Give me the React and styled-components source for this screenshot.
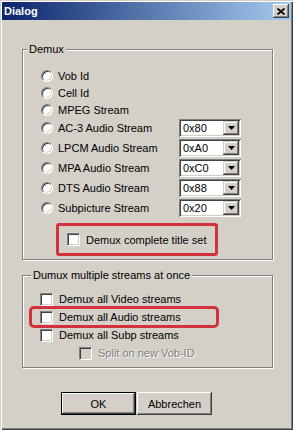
import React from 'react';
import styled, { createGlobalStyle } from 'styled-components';

const colors = {
    face: '#d4d0c8',
    shadow: '#808080',
    dark: '#404040',
    light: '#ffffff',
    mark: '#d2323e',
};

const GlobalStyle = createGlobalStyle`
    html, body {
        margin: 0;
        padding: 0;
        background: ${colors.face};
    }
    body {
        font-family: "Liberation Sans", Arial, sans-serif;
        font-size: 11px;
        color: #000;
    }
`;

const Window = styled.div`
    width: 293px;
    height: 430px;
    box-sizing: border-box;
    padding: 2px;
    background: ${colors.face};
    box-shadow: inset 1px 1px 0 ${colors.face}, inset 2px 2px 0 ${colors.light},
        inset -1px -1px 0 ${colors.dark}, inset -2px -2px 0 ${colors.shadow};
    display: flex;
    flex-direction: column;
`;

const TitleBar = styled.div`
    height: 18px;
    display: flex;
    align-items: center;
    justify-content: space-between;
    padding: 0 2px 0 2px;
    background: linear-gradient(to right, #0a246a, #a6caf0);
    color: #fff;
    font-weight: bold;
    font-size: 11px;
`;

const CloseButton = styled.div`
    width: 16px;
    height: 14px;
    display: flex;
    align-items: center;
    justify-content: center;
    background: ${colors.face};
    box-shadow: inset -1px -1px 0 ${colors.dark}, inset 1px 1px 0 ${colors.light},
        inset -2px -2px 0 ${colors.shadow};
`;

const Body = styled.div`
    padding: 0 0 0 20px;
    display: flex;
    flex-direction: column;
`;

const Group = styled.div`
    position: relative;
    width: 251px;
    box-sizing: border-box;
    margin-top: ${(p) => p.$top}px;
    padding: ${(p) => p.$pad};
    border: 1px solid ${colors.shadow};
    box-shadow: inset 1px 1px 0 ${colors.light}, 1px 1px 0 ${colors.light};
`;

const Legend = styled.span`
    position: absolute;
    top: -7px;
    left: ${(p) => p.$left}px;
    padding: 0 2px;
    line-height: 13px;
    background: ${colors.face};
`;

const OptionList = styled.div`
    width: 200px;
    display: flex;
    flex-direction: column;
`;

const Row = styled.div`
    height: ${(p) => p.$h || 18}px;
    display: flex;
    align-items: center;
    margin-left: ${(p) => p.$indent || 0}px;
    color: ${(p) => (p.$disabled ? colors.shadow : '#000')};
    text-shadow: ${(p) => (p.$disabled ? `1px 1px 0 ${colors.light}` : 'none')};
    white-space: nowrap;

    ${(p) =>
        p.$marked &&
        `
        margin-left: -9px;
        padding-left: 9px;
        width: 186px;
        box-sizing: border-box;
        outline: 3px solid ${colors.mark};
        outline-offset: -1px;
        border-radius: 3px;
    `}
`;

const Radio = styled.span`
    width: 12px;
    height: 12px;
    box-sizing: border-box;
    flex: none;
    border-radius: 50%;
    background: #fff;
    border: 1px solid;
    border-color: ${colors.shadow} ${colors.light} ${colors.light} ${colors.shadow};
    box-shadow: inset 1px 1px 0 ${colors.dark}, inset -1px -1px 0 ${colors.face};
    margin-right: 5px;
`;

const Check = styled.span`
    width: 13px;
    height: 13px;
    box-sizing: border-box;
    flex: none;
    background: ${(p) => (p.$disabled ? colors.face : '#fff')};
    border: 1px solid;
    border-color: ${colors.shadow} ${colors.light} ${colors.light} ${colors.shadow};
    box-shadow: inset 1px 1px 0 ${colors.dark}, inset -1px -1px 0 ${colors.face};
    margin-right: 6px;
`;

const Combo = styled.div`
    margin-left: auto;
    width: 62px;
    height: 18px;
    box-sizing: border-box;
    padding: 2px;
    display: flex;
    align-items: center;
    background: #fff;
    box-shadow: inset 1px 1px 0 ${colors.shadow}, inset -1px -1px 0 ${colors.light},
        inset 2px 2px 0 ${colors.dark}, inset -2px -2px 0 ${colors.face};
`;

const ComboText = styled.span`
    flex: 1;
    padding-left: 2px;
`;

const DropButton = styled.span`
    width: 16px;
    height: 14px;
    display: flex;
    align-items: center;
    justify-content: center;
    background: ${colors.face};
    box-shadow: inset -1px -1px 0 ${colors.dark}, inset 1px 1px 0 ${colors.face},
        inset -2px -2px 0 ${colors.shadow}, inset 2px 2px 0 ${colors.light};
`;

const MarkBox = styled.div`
    margin: 5px 0 0 15px;
    width: 162px;
    height: 33px;
    box-sizing: border-box;
    border: 3px solid ${colors.mark};
    border-radius: 3px;
    padding-left: 8px;
    display: flex;
    align-items: center;
`;

const ButtonRow = styled.div`
    margin: 24px 0 0 39px;
    display: flex;
    gap: 1px;
`;

const Button = styled.div`
    width: 75px;
    height: 23px;
    box-sizing: border-box;
    display: flex;
    align-items: center;
    justify-content: center;
    background: ${colors.face};
    border: 1px solid ${(p) => (p.$default ? '#000' : 'transparent')};
    box-shadow: ${(p) =>
        p.$default
            ? `inset -1px -1px 0 ${colors.dark}, inset 1px 1px 0 ${colors.light}, inset -2px -2px 0 ${colors.shadow}`
            : `inset -1px -1px 0 ${colors.dark}, inset 1px 1px 0 ${colors.light}, inset -2px -2px 0 ${colors.shadow}`};
    ${(p) => !p.$default && 'border: none;'}
`;

const Arrow = () => (
    <svg width="7" height="4" viewBox="0 0 7 4">
        <polygon points="0,0 7,0 3.5,4" fill="#000" />
    </svg>
);

const CloseIcon = () => (
    <svg width="8" height="7" viewBox="0 0 8 7">
        <path d="M0.5 0.5 L7.5 6.5 M7.5 0.5 L0.5 6.5" stroke="#000" strokeWidth="1.7" />
    </svg>
);

const streams = [
    { label: 'Vob Id', h: 17 },
    { label: 'Cell Id', h: 17 },
    { label: 'MPEG Stream', h: 17 },
    { label: 'AC-3 Audio Stream', h: 20, id: '0x80' },
    { label: 'LPCM Audio Stream', h: 20, id: '0xA0' },
    { label: 'MPA Audio Stream', h: 20, id: '0xC0' },
    { label: 'DTS Audio Stream', h: 20, id: '0x88' },
    { label: 'Subpicture Stream', h: 20, id: '0x20' },
];

export default function App() {
    return (
        <>
            <GlobalStyle />
            <Window>
                <TitleBar>
                    <span>Dialog</span>
                    <CloseButton>
                        <CloseIcon />
                    </CloseButton>
                </TitleBar>
                <Body>
                    <Group $top={29} $pad="17px 0 3px 18px">
                        <Legend $left={4}>Demux</Legend>
                        <OptionList>
                            {streams.map((s) => (
                                <Row key={s.label} $h={s.h}>
                                    <Radio />
                                    {s.label}
                                    {s.id && (
                                        <Combo>
                                            <ComboText>{s.id}</ComboText>
                                            <DropButton>
                                                <Arrow />
                                            </DropButton>
                                        </Combo>
                                    )}
                                </Row>
                            ))}
                        </OptionList>
                        <MarkBox>
                            <Check />
                            Demux complete title set
                        </MarkBox>
                    </Group>
                    <Group $top={15} $pad="14px 0 5px 17px">
                        <Legend $left={8}>Dumux multiple streams at once</Legend>
                        <Row>
                            <Check />
                            Demux all Video streams
                        </Row>
                        <Row $marked>
                            <Check />
                            Demux all Audio streams
                        </Row>
                        <Row>
                            <Check />
                            Demux all Subp streams
                        </Row>
                        <Row $indent={39} $disabled>
                            <Check $disabled />
                            Split on new Vob-ID
                        </Row>
                    </Group>
                    <ButtonRow>
                        <Button $default>OK</Button>
                        <Button>Abbrechen</Button>
                    </ButtonRow>
                </Body>
            </Window>
        </>
    );
}
